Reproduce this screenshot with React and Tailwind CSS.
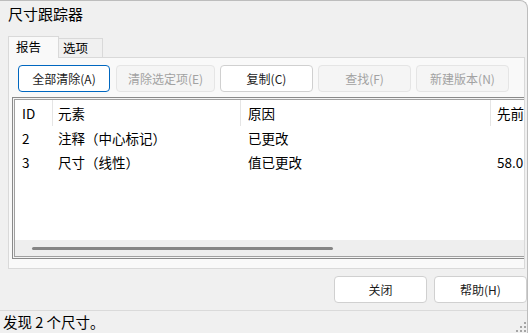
import React from "react";

const F = "font-['Noto_Sans_CJK_SC','Noto_Sans',sans-serif]";

function Btn({ children, w, state = "normal" }) {
  const cls =
    state === "focus"
      ? "bg-white border-[#0067c0] text-[#1b1b1b]"
      : state === "disabled"
      ? "bg-[#f5f5f5] border-[#e5e5e5] text-[#a2a2a2]"
      : "bg-white border-[#d0d0d0] text-[#1b1b1b]";
  return (
    <div
      className={`${w} h-[27px] shrink-0 rounded-[4px] border flex items-center justify-center text-[12px] leading-none ${cls}`}
    >
      {children}
    </div>
  );
}

const cols = [
  "w-[38px] pl-[7px]",
  "w-[188px] pl-[5px]",
  "w-[250px] pl-[7px]",
  "w-[80px] pl-[6px]",
];

function Row({ cells, header }) {
  return (
    <div className={`flex ${header ? "h-[26px]" : "h-[24px]"} items-center`}>
      {cells.map((c, i) => (
        <div
          key={i}
          className={`${cols[i]} shrink-0 h-full flex items-center whitespace-nowrap ${
            header && i < 3 ? "border-r border-[#e5e5e5]" : ""
          }`}
        >
          {c}
        </div>
      ))}
    </div>
  );
}

export default function App() {
  return (
    <div className={`w-[531px] h-[333px] bg-white overflow-hidden flex ${F} text-black`}>
      <div className="relative w-[528px] h-[333px] shrink-0 bg-[#f0f0f0] border-t border-r border-[#bdbdbd] rounded-tr-[8px] overflow-hidden flex flex-col">
        {/* title */}
        <div className="h-[35px] shrink-0 pl-[8px] pt-[3px] text-[15px] leading-[20px]">
          尺寸跟踪器
        </div>
        {/* tabs */}
        <div className="h-[21px] shrink-0 pl-[8px] flex items-end">
          <div className="relative z-10 w-[51px] h-[22px] mb-[-1px] bg-[#f9f9f9] border-l border-t border-r border-[#d9d9d9] flex items-center pl-[7px] text-[12.5px]">
            报告
          </div>
          <div className="w-[44px] h-[19px] bg-[#f0f0f0] border-t border-r border-[#d9d9d9] flex items-center pl-[4px] text-[12.5px]">
            选项
          </div>
        </div>
        {/* panel */}
        <div className="ml-[8px] w-[517px] h-[212px] shrink-0 bg-[#f9f9f9] border border-[#d9d9d9] overflow-hidden pl-[3px] pt-[7px]">
          <div className="flex pl-[6px] h-[27px]">
            <Btn w="w-[92px]" state="focus">全部清除(A)</Btn>
            <div className="w-[6px] shrink-0" />
            <Btn w="w-[99px]" state="disabled">清除选定项(E)</Btn>
            <div className="w-[5px] shrink-0" />
            <Btn w="w-[93px]">复制(C)</Btn>
            <div className="w-[5px] shrink-0" />
            <Btn w="w-[93px]" state="disabled">查找(F)</Btn>
            <div className="w-[5px] shrink-0" />
            <Btn w="w-[93px]" state="disabled">新建版本(N)</Btn>
          </div>
          {/* list */}
          <div className="mt-[5px] w-[560px] h-[162px] border border-[#8a8a8a] p-px bg-[#f4f4f4]">
            <div className="h-full border border-[#a0a0a0] flex flex-col text-[13.5px]">
              <div className="h-[140px] bg-white">
                <Row header cells={["ID", "元素", "原因", "先前"]} />
                <Row cells={["2", "注释（中心标记）", "已更改", ""]} />
                <Row cells={["3", "尺寸（线性）", "值已更改", "58.0"]} />
              </div>
              <div className="flex-1 bg-[#eeeeee] flex items-center pl-[17px]">
                <div className="w-[301px] h-[3px] rounded-full bg-[#858585]" />
              </div>
            </div>
          </div>
        </div>
        {/* bottom buttons */}
        <div className="flex-1 flex justify-end items-start pt-[7px] gap-[7px]">
          <Btn w="w-[93px]">关闭</Btn>
          <Btn w="w-[93px]">帮助(H)</Btn>
        </div>
        {/* status bar */}
        <div className="h-[23px] shrink-0 border-t border-[#dadada] flex items-center pl-[3px] text-[14.5px] leading-none">
          发现 2 个尺寸。
        </div>
        <svg className="absolute right-[1px] bottom-[1px]" width="10" height="10" viewBox="0 0 10 10">
          <g fill="#a6a6a6">
            <rect x="8" y="0" width="2" height="2" />
            <rect x="4" y="4" width="2" height="2" />
            <rect x="8" y="4" width="2" height="2" />
            <rect x="0" y="8" width="2" height="2" />
            <rect x="4" y="8" width="2" height="2" />
            <rect x="8" y="8" width="2" height="2" />
          </g>
        </svg>
      </div>
    </div>
  );
}
